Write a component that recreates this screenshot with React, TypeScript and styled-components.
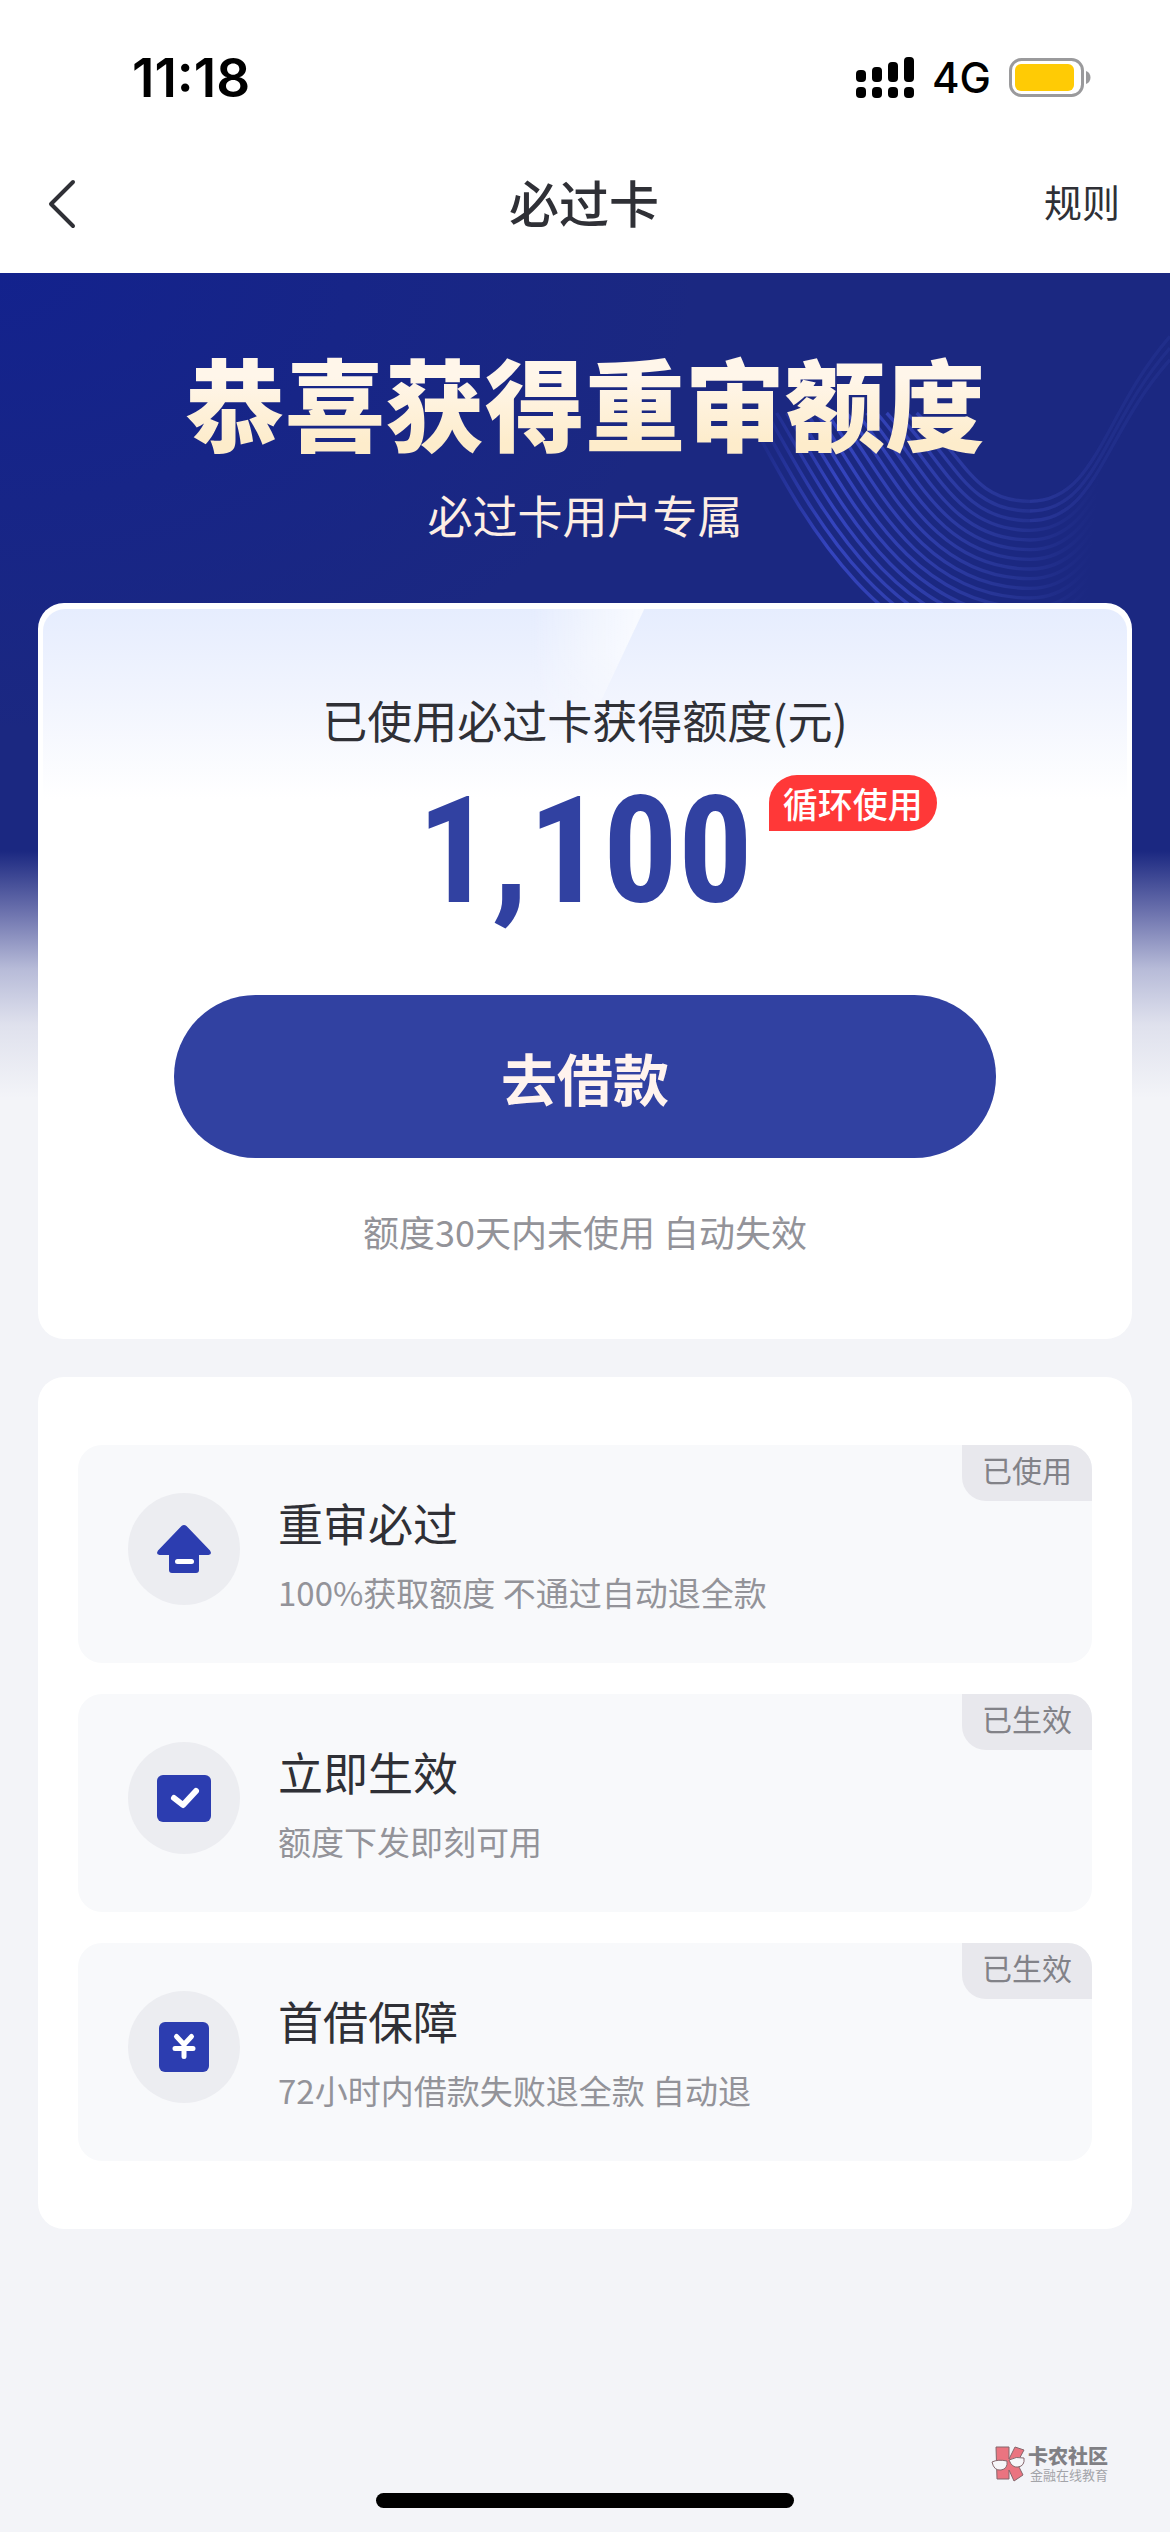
import React from "react";
import styled, { createGlobalStyle } from "styled-components";

const GlobalStyle = createGlobalStyle`
  * { box-sizing: border-box; }
  body {
    margin: 0;
    background: #f3f4f8;
    color: #2f3036;
    font-family: "Noto Sans CJK SC", "Noto Sans", sans-serif;
  }
  h1, h2, h3, p, ul { margin: 0; padding: 0; font-weight: 400; }
  button { border: 0; padding: 0; background: none; color: inherit; font: inherit; cursor: pointer; }
`;

const Page = styled.div`
  display: flex;
  flex-direction: column;
  min-height: 100vh;
`;

const Header = styled.header`
  background: #fff;
`;

const StatusBar = styled.div`
  display: flex;
  align-items: center;
  justify-content: space-between;
  padding: 48px 78px 32px 132px;
  color: #000;
  font-family: Inter, "Liberation Sans", sans-serif;
  line-height: 60px;
`;

const Clock = styled.time`
  font-size: 53px;
  font-weight: 600;
`;

const StatusIcons = styled.div`
  display: flex;
  align-items: center;
  gap: 18px;
  font-size: 42px;
  font-weight: 500;
`;

const NavBar = styled.nav`
  display: grid;
  grid-template-columns: 1fr auto 1fr;
  align-items: center;
  height: 133px;
  padding: 0 50px 6px 48px;
`;

const BackButton = styled.button`
  display: flex;
  justify-self: start;
`;

const NavTitle = styled.h1`
  padding-bottom: 5px;
  font-size: 50px;
  font-weight: 500;
  line-height: 60px;
`;

const RulesButton = styled.button`
  justify-self: end;
  padding-bottom: 5px;
  font-size: 38px;
  line-height: 60px;
`;

const Main = styled.main`
  position: relative;
  display: flex;
  flex-direction: column;
  padding: 0 38px;
  background:
    linear-gradient(to bottom, transparent 578px, #6d73ae 640px, #b7bbd8 696px, #dfe1ed 752px, #f3f4f8 825px),
    radial-gradient(ellipse 700px 460px at 0 0, #13228d, transparent),
    #1b2881;
`;

const Waves = styled.svg`
  position: absolute;
  top: 0;
  right: 0;
  width: 450px;
  height: 340px;
`;

const Banner = styled.section`
  position: relative;
  padding: 68px 0 58px;
  text-align: center;
`;

const BannerTitle = styled.h2`
  background: linear-gradient(to bottom, #fff6ea 30%, #fdeccb 85%);
  background-clip: text;
  -webkit-background-clip: text;
  color: transparent;
  font-size: 100px;
  font-weight: 900;
  line-height: 120px;
`;

const BannerSubtitle = styled.p`
  margin-top: 24px;
  color: #fdeee4;
  font-size: 45px;
  line-height: 60px;
`;

const Card = styled.section`
  position: relative;
  border-radius: 26px;
  background: #fff;
`;

const QuotaCard = styled(Card)`
  display: flex;
  flex-direction: column;
  align-items: center;
  padding: 87px 40px 83px;

  &::before {
    content: "";
    position: absolute;
    inset: 6px 5px auto;
    height: 190px;
    border-radius: 22px 22px 0 0;
    background: linear-gradient(to bottom, #e6edfe, #f2f5fe 50%, #fff);
  }

  &::after {
    content: "";
    position: absolute;
    top: 6px;
    left: 45%;
    width: 114px;
    height: 150px;
    clip-path: polygon(0 0, 100% 0, 38% 100%, 0 100%);
    background: linear-gradient(to right, transparent, rgba(255, 255, 255, 0.75));
    mask-image: linear-gradient(to bottom, #000 30%, transparent);
  }
`;

const QuotaLabel = styled.h3`
  position: relative;
  z-index: 1;
  font-size: 45px;
  line-height: 60px;
`;

const Amount = styled.p`
  position: relative;
  margin-top: 27px;
  color: #3141a1;
  font-family: "Liberation Sans Narrow", "Roboto Condensed", Roboto, sans-serif;
  font-size: 148px;
  font-weight: 700;
  line-height: 150px;
`;

const AmountBadge = styled.span`
  position: absolute;
  top: -2px;
  left: calc(100% + 16px);
  padding: 0 14px;
  border-radius: 28px 28px 28px 0;
  background: #ff3838;
  color: #fff;
  font-family: "Noto Sans CJK SC", sans-serif;
  font-size: 35px;
  font-weight: 500;
  line-height: 56px;
  white-space: nowrap;
`;

const BorrowButton = styled.button`
  width: 81%;
  margin-top: 68px;
  border-radius: 82px;
  background: #3141a1;
  color: #fff3ee;
  font-size: 56px;
  font-weight: 700;
  line-height: 163px;
`;

const QuotaNote = styled.p`
  margin-top: 48px;
  color: #939399;
  font-size: 36px;
  line-height: 50px;
`;

const BenefitCard = styled(Card)`
  margin-top: 38px;
  padding: 68px 40px;
`;

const BenefitList = styled.ul`
  display: flex;
  flex-direction: column;
  gap: 31px;
  list-style: none;
`;

const BenefitRow = styled.li`
  position: relative;
  display: flex;
  align-items: flex-start;
  gap: 38px;
  height: 218px;
  padding: 48px 50px;
  border-radius: 24px;
  background: #f8f9fb;
`;

const IconDisc = styled.span`
  display: grid;
  place-items: center;
  width: 112px;
  height: 112px;
  border-radius: 50%;
  background: #ecedf1;
`;

const BenefitTitle = styled.h3`
  font-size: 45px;
  line-height: 60px;
`;

const BenefitDetail = styled.p`
  margin-top: 14px;
  color: #939399;
  font-size: 33px;
  line-height: 50px;
`;

const StateTag = styled.span`
  position: absolute;
  top: 0;
  right: 0;
  padding: 0 20px 8px;
  border-radius: 0 24px;
  background: #e8e8ed;
  color: #828288;
  font-size: 30px;
  line-height: 48px;
`;

const Footer = styled.footer`
  display: flex;
  flex-direction: column;
  align-items: center;
  margin-top: auto;
  padding-bottom: 24px;
`;

const Watermark = styled.div`
  display: flex;
  align-items: center;
  align-self: flex-end;
  gap: 3px;
  margin: 0 62px 10px 0;
  color: #808085;
`;

const WatermarkName = styled.p`
  font-size: 20px;
  font-weight: 900;
  line-height: 22px;
`;

const WatermarkTagline = styled.p`
  color: #a3a4a9;
  font-size: 13px;
  line-height: 16px;
  text-align: right;
`;

const HomeIndicator = styled.div`
  width: 418px;
  height: 15px;
  border-radius: 8px;
  background: #000;
`;

function SignalIcon() {
  const tops = [13, 10, 5, 0];
  return (
    <svg width="58" height="42" viewBox="0 0 58 42" aria-hidden="true">
      {tops.map((top, i) => (
        <g key={top}>
          <rect x={i * 16} y={top} width="10" height={25 - top} rx="4" />
          <rect x={i * 16} y="30" width="10" height="11" rx="4" />
        </g>
      ))}
    </svg>
  );
}

function BatteryIcon() {
  return (
    <svg width="83" height="40" viewBox="0 0 83 40" aria-hidden="true">
      <rect x="1.5" y="1.5" width="72" height="36" rx="11" fill="none" stroke="#9a9a9c" strokeWidth="3" />
      <rect x="6" y="6" width="59" height="27" rx="6" fill="#ffcb05" />
      <path d="M77 13c6 2 6 11 0 13z" fill="#9a9a9c" />
    </svg>
  );
}

function WaveLines() {
  const lines = Array.from({ length: 18 }, (_, i) => i);
  return (
    <Waves viewBox="0 0 1350 1020" preserveAspectRatio="xMaxYMin slice" aria-hidden="true">
      <defs>
        <linearGradient id="wave" gradientUnits="userSpaceOnUse" x1="100" y1="400" x2="1150" y2="500">
          <stop offset="0" stopColor="#3a4ad0" stopOpacity="0" />
          <stop offset="0.25" stopColor="#3f50d8" stopOpacity="0.7" />
          <stop offset="0.5" stopColor="#3f50d0" stopOpacity="0.55" />
          <stop offset="0.78" stopColor="#4050c0" stopOpacity="0.28" />
          <stop offset="1" stopColor="#4050c0" stopOpacity="0" />
        </linearGradient>
      </defs>
      <g fill="none" strokeWidth="10">
        {lines.map((i) => (
          <path
            key={i}
            stroke="url(#wave)"
            d={`M${590 - 30 * i} 420C${740 - 31 * i} ${560 + 6 * i} ${760 - 18 * i} ${685 + 29 * i} 930 ${685 + 29 * i}C1130 ${685 + 29 * i} 1150 ${420 + 32 * i} 1350 ${190 + 35 * i}`}
          />
        ))}
        {[0, 1, 2].map((i) => (
          <path
            key={i}
            stroke="#4050c0"
            strokeOpacity="0.15"
            d={`M930 ${685 + 29 * i}C1130 ${685 + 29 * i} 1150 ${420 + 32 * i} 1350 ${190 + 35 * i}`}
          />
        ))}
      </g>
    </Waves>
  );
}

const ICON_BLUE = "#2c3db0";

function HouseIcon() {
  return (
    <svg width="56" height="50" viewBox="0 0 56 50" aria-hidden="true">
      <path
        d="M25.5 2Q28 0 30.500 2L54 26.500Q56.500 30.500 52.500 31H43V46Q43 49 40 49H16Q13 49 13 46V31H3.500Q-.5 30.500 2 26.500Z"
        fill={ICON_BLUE}
      />
      <rect x="19" y="35" width="19" height="5" rx="2.500" fill="#fff" />
    </svg>
  );
}

function CheckIcon() {
  return (
    <svg width="54" height="47" viewBox="0 0 54 47" aria-hidden="true">
      <rect width="54" height="47" rx="6" fill={ICON_BLUE} />
      <path d="M17 23l9 7 13-14" fill="none" stroke="#fff" strokeWidth="6" strokeLinecap="round" strokeLinejoin="round" />
    </svg>
  );
}

function YuanIcon() {
  return (
    <svg width="50" height="50" viewBox="0 0 50 50" aria-hidden="true">
      <rect width="50" height="50" rx="6" fill={ICON_BLUE} />
      <path
        d="M17.500 14.500l7.500 8 7.500-8M25 22.500v12M16 26.500h18"
        fill="none"
        stroke="#fff"
        strokeWidth="5"
        strokeLinecap="round"
        strokeLinejoin="round"
      />
    </svg>
  );
}

function CommunityLogo() {
  return (
    <svg width="34" height="36" viewBox="0 0 34 36" aria-hidden="true">
      <g stroke="#85666c" strokeWidth="1" strokeLinejoin="round">
        <path d="M5 1h13v12l6-12 9 3-7 13 6 12-9 6-5-11v9H6z" fill="#ea7480" />
        <path d="M1 16q6-3 15-1 1 8-6 9-7 1-9-8zM18 14q7-4 15-2 1 8-6 9-6 1-9-7z" fill="#f6f6f9" />
      </g>
    </svg>
  );
}

const benefits = [
  { title: "重审必过", detail: "100%获取额度 不通过自动退全款", state: "已使用", Icon: HouseIcon },
  { title: "立即生效", detail: "额度下发即刻可用", state: "已生效", Icon: CheckIcon },
  { title: "首借保障", detail: "72小时内借款失败退全款 自动退", state: "已生效", Icon: YuanIcon },
];

export default function App() {
  return (
    <Page>
      <GlobalStyle />
      <Header>
        <StatusBar>
          <Clock>11:18</Clock>
          <StatusIcons>
            <SignalIcon />
            <span>4G</span>
            <BatteryIcon />
          </StatusIcons>
        </StatusBar>
        <NavBar>
          <BackButton aria-label="返回">
            <svg width="28" height="50" viewBox="0 0 28 50" aria-hidden="true">
              <path d="M25 3L3 25l22 22" fill="none" stroke="#2f3036" strokeWidth="4" strokeLinecap="round" strokeLinejoin="round" />
            </svg>
          </BackButton>
          <NavTitle>必过卡</NavTitle>
          <RulesButton>规则</RulesButton>
        </NavBar>
      </Header>
      <Main>
        <WaveLines />
        <Banner>
          <BannerTitle>恭喜获得重审额度</BannerTitle>
          <BannerSubtitle>必过卡用户专属</BannerSubtitle>
        </Banner>
        <QuotaCard>
          <QuotaLabel>已使用必过卡获得额度(元)</QuotaLabel>
          <Amount>
            1,100
            <AmountBadge>循环使用</AmountBadge>
          </Amount>
          <BorrowButton>去借款</BorrowButton>
          <QuotaNote>额度30天内未使用 自动失效</QuotaNote>
        </QuotaCard>
        <BenefitCard>
          <BenefitList>
            {benefits.map(({ title, detail, state, Icon }) => (
              <BenefitRow key={title}>
                <IconDisc>
                  <Icon />
                </IconDisc>
                <div>
                  <BenefitTitle>{title}</BenefitTitle>
                  <BenefitDetail>{detail}</BenefitDetail>
                </div>
                <StateTag>{state}</StateTag>
              </BenefitRow>
            ))}
          </BenefitList>
        </BenefitCard>
      </Main>
      <Footer>
        <Watermark>
          <CommunityLogo />
          <div>
            <WatermarkName>卡农社区</WatermarkName>
            <WatermarkTagline>金融在线教育</WatermarkTagline>
          </div>
        </Watermark>
        <HomeIndicator />
      </Footer>
    </Page>
  );
}
